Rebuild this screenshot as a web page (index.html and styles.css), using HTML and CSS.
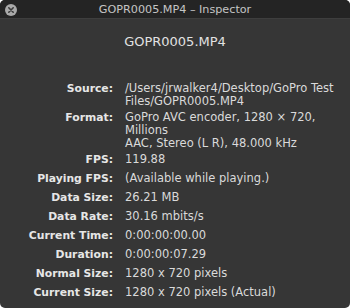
FILE: index.html
```html
<!DOCTYPE html>
<html lang="en">
<head>
    <meta charset="UTF-8">
    <title>GOPR0005.MP4 – Inspector</title>
    <link rel="stylesheet" href="styles.css">
</head>
<body>

    <div class="window">
        <div class="titlebar">
            <span class="close-btn">
                <svg width="12" height="12" viewBox="0 0 12 12">
                    <circle cx="6" cy="6" r="6" fill="#a9a9a9"/>
                    <path d="M3.8 3.8 L8.2 8.2 M8.2 3.8 L3.8 8.2" stroke="#3a3a3a" stroke-width="1.6" stroke-linecap="round"/>
                </svg>
            </span>
            <span class="title">GOPR0005.MP4 – Inspector</span>
        </div>

        <div class="content">
            <h1 class="file-name">GOPR0005.MP4</h1>

            <div class="info">
                <div class="label">Source:</div>
                <div class="value">/Users/jrwalker4/Desktop/GoPro Test<br>Files/GOPR0005.MP4</div>

                <div class="label">Format:</div>
                <div class="value">GoPro AVC encoder, 1280 × 720,<br>Millions<br>AAC, Stereo (L R), 48.000 kHz</div>

                <div class="label">FPS:</div>
                <div class="value">119.88</div>

                <div class="label">Playing FPS:</div>
                <div class="value">(Available while playing.)</div>

                <div class="label">Data Size:</div>
                <div class="value">26.21 MB</div>

                <div class="label">Data Rate:</div>
                <div class="value">30.16 mbits/s</div>

                <div class="label">Current Time:</div>
                <div class="value">0:00:00:00.00</div>

                <div class="label">Duration:</div>
                <div class="value">0:00:00:07.29</div>

                <div class="label">Normal Size:</div>
                <div class="value">1280 x 720 pixels</div>

                <div class="label">Current Size:</div>
                <div class="value">1280 x 720 pixels (Actual)</div>
            </div>
        </div>
    </div>

</body>
</html>
```

FILE: styles.css
```css
body {
    margin: 0;
    background-color: #ffffff;
    font-family: "DejaVu Sans", sans-serif;
}
.window {
    width: 350px;
    height: 308px;
    border-radius: 5px;
    overflow: hidden;
    background-color: #363636;
    display: flex;
    flex-direction: column;
}
.titlebar {
    height: 19px;
    background-color: #242424;
    border-bottom: 1px solid #3e3e3e;
    display: flex;
    align-items: center;
    justify-content: center;
    position: relative;
    box-sizing: border-box;
}
.close-btn {
    position: absolute;
    left: 5px;
    top: 4px;
    width: 12px;
    height: 12px;
}
.close-btn svg {
    display: block;
}
.title {
    color: #c4c4c4;
    font-size: 11.2px;
}
.file-name {
    margin: 15px 0 0;
    text-align: center;
    font-weight: normal;
    font-size: 13px;
    line-height: 16px;
    color: #e2e2e2;
}
.info {
    margin-top: 31px;
    display: grid;
    grid-template-columns: 113px 1fr;
    column-gap: 12px;
    grid-auto-rows: minmax(19px, auto);
    line-height: 13px;
}
.label {
    text-align: right;
    font-weight: bold;
    font-size: 10.8px;
    color: #e6e6e6;
    padding: 1px 0 2px;
    white-space: nowrap;
}
.value {
    color: #dadada;
    font-size: 11.5px;
    padding: 1px 0 2px;
    white-space: nowrap;
}
```
